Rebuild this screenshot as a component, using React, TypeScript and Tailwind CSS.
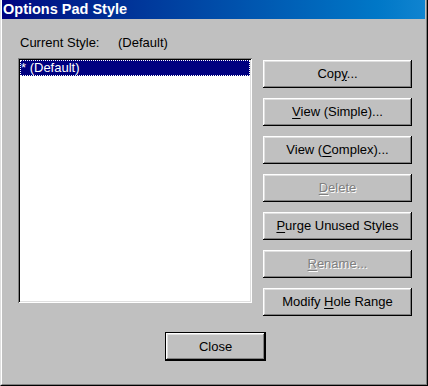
const raised =
  "shadow-[inset_-1px_-1px_#000000,inset_1px_1px_#ffffff,inset_-2px_-2px_#808080,inset_2px_2px_#dfdfdf]";

function Btn({
  children,
  disabled,
}: {
  children: React.ReactNode;
  disabled?: boolean;
}) {
  return (
    <div
      className={`h-[28px] w-[149px] flex items-center justify-center bg-[#c0c0c0] ${raised} text-[13px] leading-[16px] ${
        disabled ? "text-[#808080] [text-shadow:1px_1px_0_#ffffff]" : "text-black"
      }`}
    >
      <span>{children}</span>
    </div>
  );
}

export default function App() {
  return (
    <div className="w-[428px] h-[386px] bg-[#c0c0c0] border-l border-l-[#dfdfdf] border-r border-r-black border-b border-b-black [font-family:'Liberation_Sans',Arial,sans-serif] select-none">
      <div className="h-full flex flex-col border-l border-l-white border-r border-r-[#808080] border-b border-b-[#808080]">
        <div className="h-[19px] mr-[1px] bg-gradient-to-r from-[#000080] to-[#1084d0] flex items-center pl-[1px]">
          <span className="text-white font-bold text-[14.5px] leading-[19px]">Options Pad Style</span>
        </div>
        <div className="flex-1 flex flex-col pl-[16px] pt-[16px]">
          <div className="h-[16px] flex items-center pl-[2px] text-[13px] leading-[16px] text-black">
            <span className="w-[98px]">Current Style:</span>
            <span>(Default)</span>
          </div>
          <div className="mt-[7px] flex items-start">
            <div className="w-[234px] h-[245px] bg-white p-[2px] shadow-[inset_1px_1px_#808080,inset_-1px_-1px_#ffffff,inset_2px_2px_#000000,inset_-2px_-2px_#dfdfdf]">
              <div className="h-[16px] bg-[#000080] border border-dotted border-white flex items-center text-white text-[13px] leading-[14px]">
                <span>* (Default)</span>
              </div>
            </div>
            <div className="ml-[11px] mt-[2px] w-[149px] flex flex-col gap-[10px]">
              <Btn>
                Cop<u className="underline-offset-[2px]">y</u>...
              </Btn>
              <Btn>
                <u className="underline-offset-[2px]">V</u>iew (Simple)...
              </Btn>
              <Btn>
                View (<u className="underline-offset-[2px]">C</u>omplex)...
              </Btn>
              <Btn disabled>
                <u className="underline-offset-[2px]">D</u>elete
              </Btn>
              <Btn>
                <u className="underline-offset-[2px]">P</u>urge Unused Styles
              </Btn>
              <Btn disabled>
                <u className="underline-offset-[2px]">R</u>ename...
              </Btn>
              <Btn>
                Modify <u className="underline-offset-[2px]">H</u>ole Range
              </Btn>
            </div>
          </div>
          <div className="mt-[16px] ml-[147px] w-[101px] h-[29px] border border-black">
            <div
              className={`h-full w-full flex items-center justify-center bg-[#c0c0c0] ${raised} text-[13px] leading-[16px] text-black`}
            >
              Close
            </div>
          </div>
        </div>
      </div>
    </div>
  );
}
